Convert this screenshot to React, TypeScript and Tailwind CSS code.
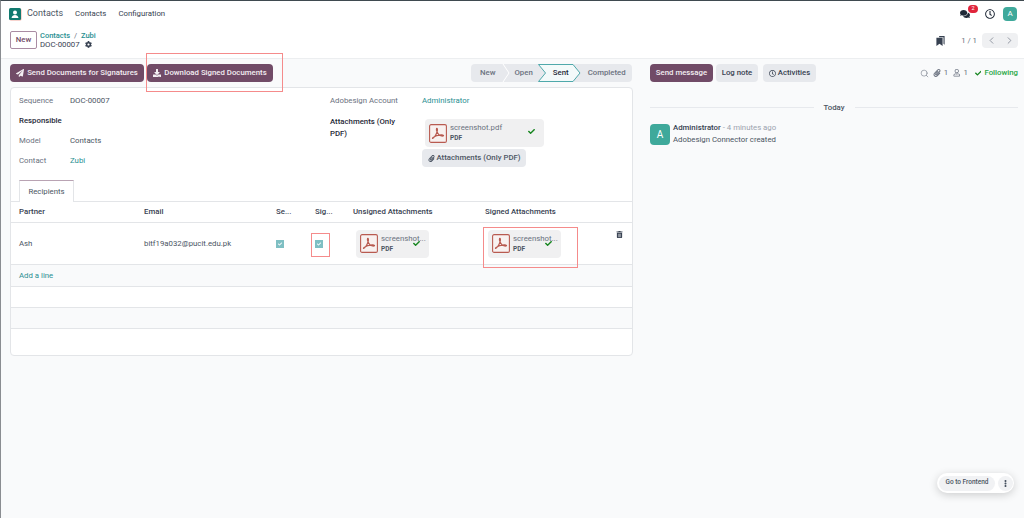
import { ChevronLeft, ChevronRight, Search } from "lucide-react";
import {
  FaCheck,
  FaCog,
  FaComments,
  FaDownload,
  FaEllipsisV,
  FaPaperPlane,
  FaPaperclip,
  FaRegClock,
  FaRegUser,
  FaTrashAlt,
} from "react-icons/fa";

function PdfIcon() {
  return (
    <svg width="18" height="19" viewBox="0 0 18 19" className="shrink-0">
      <rect x="0.6" y="0.6" width="16.8" height="17.8" rx="1.5" fill="#f8f1f0" stroke="#b85a50" strokeWidth="1.1" />
      <path
        d="M3.5 14.5c2-1 3.8-4 4.8-7.500.3-1.200.2-2.600-.4-2.600-.7 0-.6 1.500-.2 2.600.9 2.600 2.600 4.600 4.900 5 1 .2 2 0 2-.5s-1.200-.7-2.500-.6c-3 .2-6.200 1.200-8 2.500-.6.500-.8 1-.6 1.100z"
        fill="none"
        stroke="#b85a50"
        strokeWidth="1.100"
      />
    </svg>
  );
}

function AttachmentCard({ name, wide }: { name: string; wide?: boolean }) {
  return (
    <div className={"relative flex h-[28px] items-center gap-[3px] rounded-sm bg-[#f0f0f1] pl-1 " + (wide ? "w-[119px]" : "w-[73px]")}>
      <PdfIcon />
      <div className="leading-[11px]">
        <div className="whitespace-nowrap text-[7.8px] text-[#6b7280]">{name}</div>
        <div className="text-[6.5px] font-bold text-[#4b5563]">PDF</div>
      </div>
      <FaCheck className={"absolute text-[7px] text-[#16851f] " + (wide ? "right-[9px] top-[9px]" : "right-[9px] top-[10px]")} />
    </div>
  );
}

function CheckBox() {
  return (
    <span className="flex h-[8px] w-[8px] items-center justify-center bg-[#7fbfc3]">
      <FaCheck className="text-[4px] text-white" />
    </span>
  );
}

function RedBox({ className }: { className: string }) {
  return <div className={"pointer-events-none absolute border border-[#f58b8b] " + className} />;
}

function Field({ label, value, link, bold }: { label: string; value?: string; link?: boolean; bold?: boolean }) {
  return (
    <div className="flex h-[20px] items-center">
      <div className={"w-[51px] " + (bold ? "font-medium text-[#1f2937]" : "text-[#6b7280]")}>{label}</div>
      {value && <div className={link ? "text-[#2a8f92]" : "text-[#4b5563]"}>{value}</div>}
    </div>
  );
}

export default function App() {
  const cols = "grid grid-cols-[125px_132px_39px_38px_132px_1fr] pl-[8px]";

  return (
    <div className="relative h-[518px] w-[1024px] overflow-hidden border-l border-t border-l-[#8a8d91] border-t-[#3f4a50] bg-white font-['Roboto',sans-serif] text-[7.8px] text-[#374151]">
      {/* navbar */}
      <div className="flex h-[26px] items-center pl-[8px] pr-[7px]">
        <svg width="13" height="13" viewBox="0 0 13 13" className="shrink-0">
          <rect x="0.5" y="0.5" width="12" height="12" rx="1.5" fill="#f2a9a0" />
          <rect width="12" height="12" rx="1.5" fill="#117a6f" />
          <circle cx="6" cy="4.5" r="2" fill="#fff" />
          <path d="M2.5 10c.3-2 1.800-3 3.500-3s3.200 1 3.500 3z" fill="#fff" />
        </svg>
        <span className="ml-[5px] text-[9px] text-[#4b5563]">Contacts</span>
        <span className="ml-[12px] text-[#374151]">Contacts</span>
        <span className="ml-[12px] text-[#374151]">Configuration</span>
        <div className="ml-auto flex items-center">
          <div className="relative">
            <FaComments className="text-[10px] text-[#1f2937]" />
            <span className="absolute -right-[8px] -top-[4px] flex h-[8px] w-[10px] items-center justify-center rounded-full bg-[#e0243b] text-[5.5px] leading-none text-white">2</span>
          </div>
          <FaRegClock className="ml-[15px] text-[10px] text-[#1f2937]" />
          <span className="ml-[8px] flex h-[14px] w-[14px] items-center justify-center rounded-sm bg-[#3fa99b] text-[8px] text-white">A</span>
        </div>
      </div>

      {/* control panel */}
      <div className="flex h-[32px] items-start border-b border-[#eceef0] pl-[9px] pr-[6px] pt-[4px]">
        <button className="h-[18px] w-[27px] rounded-[2px] border border-[#a98ca3] text-[7.8px] font-medium text-[#714b67]">New</button>
        <div className="ml-[3px] leading-[9px]">
          <div className="text-[7.5px] font-medium text-[#2a8f92]">
            Contacts <span className="mx-[2px] font-normal text-[#6b7280]">/</span> Zubi
          </div>
          <div className="flex items-center gap-[5px] text-[#374151]">
            DOC-00007 <FaCog className="text-[7px] text-[#374151]" />
          </div>
        </div>
        <div className="ml-auto flex items-center pt-[2px]">
          <svg width="9" height="10" viewBox="0 0 9 11" fill="#374151">
            <path d="M3 0h6v9.500L7.800 8.500V1.500H3z" />
            <path d="M0 2h6.800v9L3.400 8.500 0 11z" />
          </svg>
          <span className="ml-[16px] text-[#6b7280]">1 / 1</span>
          <div className="ml-[5px] flex h-[15px] w-[36px] overflow-hidden rounded-sm bg-[#eff0f2] text-[#6b7280]">
            <span className="flex w-[18px] items-center justify-center"><ChevronLeft size={11} strokeWidth={1.5} /></span>
            <span className="flex w-[18px] items-center justify-center"><ChevronRight size={11} strokeWidth={1.5} /></span>
          </div>
        </div>
      </div>

      <div className="flex h-[459px] bg-[#f9fafb]">
        {/* form */}
        <div className="w-[640px] shrink-0 pl-[9px] pt-[5px]">
          <div className="flex h-[18px] w-[622px] items-center">
            <button className="flex h-[18px] w-[134px] items-center justify-center gap-[3px] rounded-sm bg-[#714b67] font-medium text-[#f3eef2]">
              <FaPaperPlane className="text-[8px]" /> Send Documents for Signatures
            </button>
            <button className="ml-[3px] flex h-[18px] w-[126px] items-center justify-center gap-[3px] rounded-sm bg-[#714b67] font-medium text-[#f3eef2]">
              <FaDownload className="text-[8px]" /> Download Signed Documents
            </button>
            <div className="relative ml-auto flex h-[18px] w-[161px] items-center rounded-sm bg-[#e7e9ed] text-[#6b7280]">
              <svg width="118" height="18" viewBox="0 0 118 18" fill="none" className="absolute left-[28px] top-0">
                <path d="M4 0l6 9-6 9" stroke="#fff" strokeWidth="1" />
                <path d="M39.500 0.500h34.500l7 8.500-7 8.500H39.500l7-8.500z" fill="#f3fafa" stroke="#4fa9ab" strokeWidth="1" />
              </svg>
              <span className="relative ml-[9px] font-medium">New</span>
              <span className="relative ml-[19px] font-medium">Open</span>
              <span className="relative ml-[20px] font-medium text-[#1f2937]">Sent</span>
              <span className="relative ml-[19px] font-medium">Completed</span>
            </div>
          </div>

          {/* sheet */}
          <div className="mt-[5px] h-[269px] w-[623px] rounded-sm border border-[#e3e5e8] bg-white">
            <div className="flex h-[92px] pl-[8px] pt-[3px]">
              <div className="w-[311px]">
                <Field label="Sequence" value="DOC-00007" />
                <Field label="Responsible" bold />
                <Field label="Model" value="Contacts" />
                <Field label="Contact" value="Zubi" link />
              </div>
              <div className="flex">
                <div className="w-[92px]">
                  <div className="flex h-[20px] items-center text-[#6b7280]">Adobesign Account</div>
                  <div className="mt-[5px] w-[80px] font-medium leading-[11.5px] text-[#1f2937]">Attachments (Only PDF)</div>
                </div>
                <div>
                  <div className="flex h-[20px] items-center text-[#2a8f92]">Administrator</div>
                  <div className="ml-[3px] mt-[8px]"><AttachmentCard name="screenshot.pdf" wide /></div>
                  <button className="mt-[2px] flex h-[18px] w-[104px] items-center justify-center gap-[2px] rounded-sm bg-[#e7e9ed] font-medium text-[#4b5563]">
                    <FaPaperclip className="text-[7px]" /> Attachments (Only PDF)
                  </button>
                </div>
              </div>
            </div>

            <div className="flex h-[21px] pl-[8px]">
              <div className="z-10 flex h-[22px] w-[55px] items-center justify-center border-x border-t border-x-[#e3e5e8] border-t-[#b9a3b3] bg-white text-[#4b5563]">Recipients</div>
            </div>

            {/* recipients table */}
            <div>
              <div className={cols + " h-[22px] items-center border-y border-[#e3e5e8] font-medium text-[#374151]"}>
                <span>Partner</span>
                <span>Email</span>
                <span>Se...</span>
                <span>Sig...</span>
                <span>Unsigned Attachments</span>
                <span>Signed Attachments</span>
              </div>
              <div className={cols + " relative h-[42px] items-center border-b border-[#e3e5e8] text-[#4b5563]"}>
                <span>Ash</span>
                <span>bitf19a032@pucit.edu.pk</span>
                <CheckBox />
                <CheckBox />
                <div className="pl-[3px]"><AttachmentCard name="screenshot..." /></div>
                <div className="pl-[3px]"><AttachmentCard name="screenshot..." /></div>
                <FaTrashAlt className="absolute right-[9px] top-[8px] text-[7px] text-[#374151]" />
              </div>
              <div className="flex h-[22px] items-center border-b border-[#e3e5e8] bg-[#f9fafb] pl-[8px] text-[#2a8f92]">Add a line</div>
              <div className="h-[21px] border-b border-[#e3e5e8] bg-white" />
              <div className="h-[21px] border-b border-[#e3e5e8] bg-[#f9fafb]" />
            </div>
          </div>
        </div>

        {/* chatter */}
        <div className="min-w-0 flex-1 pl-[9px] pr-[6px] pt-[5px]">
          <div className="flex h-[18px] items-center">
            <button className="h-[18px] w-[63px] rounded-sm bg-[#714b67] font-medium text-[#f3eef2]">Send message</button>
            <button className="ml-[3px] h-[18px] w-[42px] rounded-sm bg-[#e7e9ed] font-medium text-[#374151]">Log note</button>
            <button className="ml-[5px] flex h-[18px] w-[53px] items-center justify-center gap-[2px] rounded-sm bg-[#e7e9ed] font-medium text-[#374151]">
              <FaRegClock className="text-[7px]" /> Activities
            </button>
            <div className="ml-auto flex items-center text-[#6b7280]">
              <Search size={9} strokeWidth={1.5} />
              <FaPaperclip className="ml-[4px] text-[8px]" />
              <span className="ml-[3px]">1</span>
              <FaRegUser className="ml-[5px] text-[7.5px]" />
              <span className="ml-[3px]">1</span>
              <FaCheck className="ml-[7px] text-[6.5px] text-[#16851f]" />
              <span className="ml-[3px] font-medium text-[#28a745]">Following</span>
            </div>
          </div>

          <div className="mt-[20px] flex items-center gap-[10px]">
            <div className="h-px flex-1 bg-[#e7e9ed]" />
            <span className="font-medium text-[#4b5563]">Today</span>
            <div className="h-px flex-1 bg-[#e7e9ed]" />
          </div>

          <div className="mt-[10px] flex">
            <span className="flex h-[21px] w-[20px] items-center justify-center rounded-sm bg-[#3fa99b] text-[10px] text-white">A</span>
            <div className="-mt-[2px] ml-[3px] leading-[12px]">
              <div>
                <span className="font-medium text-[#374151]">Administrator</span>
                <span className="text-[#9ca3af]"> - 4 minutes ago</span>
              </div>
              <div className="text-[#4b5563]">Adobesign Connector created</div>
            </div>
          </div>
        </div>
      </div>

      {/* go to frontend */}
      <div className="absolute left-[936px] top-[472px] flex h-[20px] w-[77px] items-center rounded-full bg-white pl-[2px] shadow-[0_2px_8px_rgba(0,0,0,0.18)]">
        <span className="flex h-[15px] w-[56px] items-center justify-center rounded-full bg-[#f1f2f4] text-[6.5px] font-medium text-[#4b5563]">Go to Frontend</span>
        <span className="ml-[3px] flex h-[15px] w-[15px] items-center justify-center rounded-full bg-[#f1f2f4]">
          <FaEllipsisV className="text-[7px] text-[#4b5563]" />
        </span>
      </div>

      {/* review marks on the screenshot */}
      <RedBox className="left-[145px] top-[52px] h-[39px] w-[137px]" />
      <RedBox className="left-[310px] top-[232px] h-[24px] w-[19px]" />
      <RedBox className="left-[482px] top-[226px] h-[41px] w-[95px]" />
    </div>
  );
}
